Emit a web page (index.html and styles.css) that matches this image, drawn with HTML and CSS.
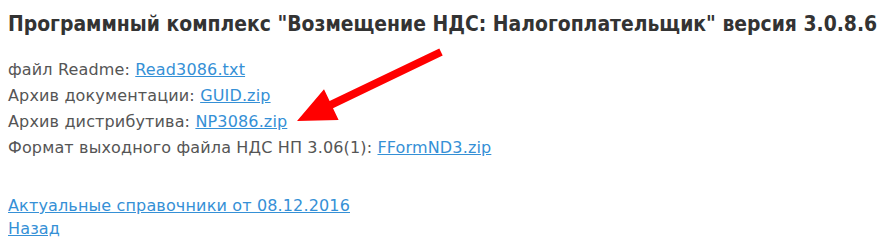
FILE: index.html
```html
<!DOCTYPE html>
<html lang="ru">
<head>
    <meta charset="UTF-8">
    <title>Возмещение НДС: Налогоплательщик</title>
    <link rel="stylesheet" href="styles.css">
</head>
<body>
    <div class="page">
        <h1 class="title">Программный комплекс "Возмещение НДС: Налогоплательщик" версия 3.0.8.6</h1>
        <div class="files">
            <div class="row">файл Readme: <a href="#">Read3086.txt</a></div>
            <div class="row">Архив документации: <a href="#">GUID.zip</a></div>
            <div class="row">Архив дистрибутива: <a href="#">NP3086.zip</a></div>
            <div class="row">Формат выходного файла НДС НП 3.06(1): <a href="#">FFormND3.zip</a></div>
        </div>
        <div class="links">
            <div class="row"><a href="#">Актуальные справочники от 08.12.2016</a></div>
            <div class="row"><a href="#">Назад</a></div>
        </div>
        <!-- red pointer over the distribution archive -->
        <svg class="arrow" width="889" height="252" viewBox="0 0 889 252">
            <polygon fill="#ff0000" points="297,121 324,89.3 329.6,101 439.3,48.4 442.7,55.6 333,108.2 338.6,119.9"/>
        </svg>
    </div>
</body>
</html>
```

FILE: styles.css
```css
html, body {
    margin: 0;
    padding: 0;
    background: #fff;
}
.page {
    position: relative;
    width: 889px;
    height: 252px;
    padding: 11px 8px 0 8px;
    box-sizing: border-box;
    font-family: "DejaVu Sans", Verdana, sans-serif;
    color: #555;
}
.title {
    margin: 0;
    font-family: "DejaVu Sans Condensed", "DejaVu Sans", sans-serif;
    font-size: 20.9px;
    line-height: 26px;
    font-weight: bold;
    color: #333;
    white-space: nowrap;
}
.files {
    margin-top: 20px;
    font-size: 16px;
    line-height: 26px;
    letter-spacing: 0.15px;
}
.links {
    margin-top: 33px;
    font-size: 16px;
    line-height: 23px;
    letter-spacing: 0.15px;
}
.row {
    white-space: nowrap;
}
a {
    color: #3590d6;
    text-decoration: underline;
}
.arrow {
    position: absolute;
    top: 0;
    left: 0;
    pointer-events: none;
}
```
